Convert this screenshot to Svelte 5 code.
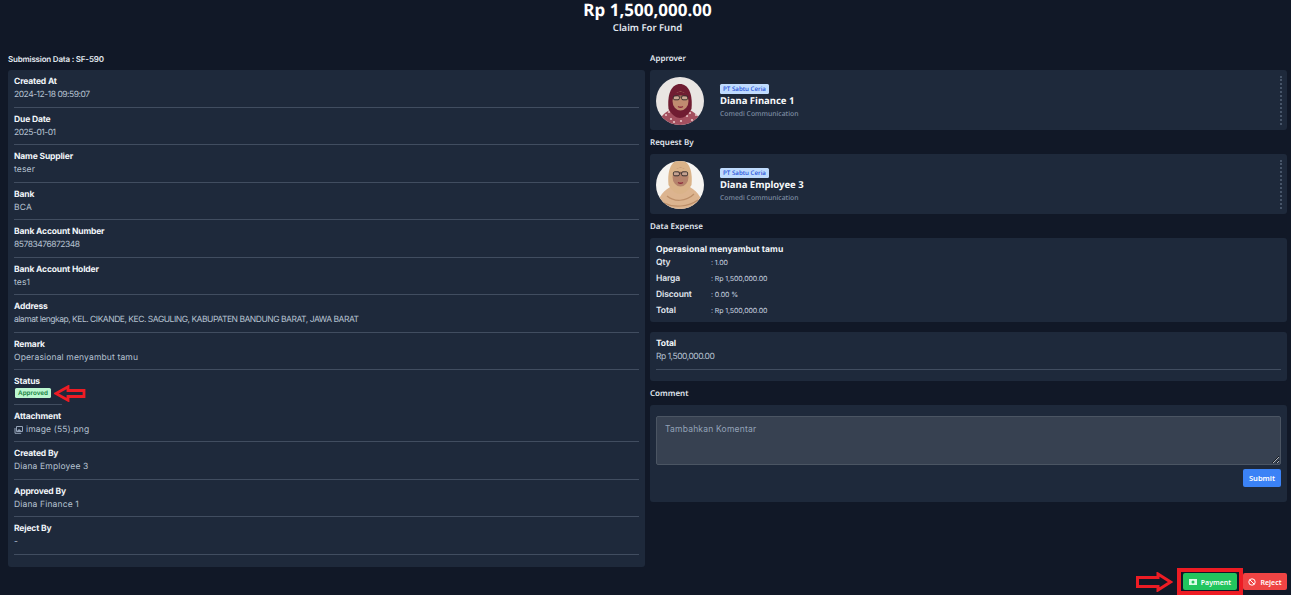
<script lang="ts">
	const fields = [
		{ label: 'Created At', value: '2024-12-18 09:59:07', tight: true },
		{ label: 'Due Date', value: '2025-01-01', tight: true },
		{ label: 'Name Supplier', value: 'teser' },
		{ label: 'Bank', value: 'BCA' },
		{ label: 'Bank Account Number', value: '85783476872348', tight: true },
		{ label: 'Bank Account Holder', value: 'tes1' },
		{ label: 'Address', value: 'alamat lengkap, KEL. CIKANDE, KEC. SAGULING, KABUPATEN BANDUNG BARAT, JAWA BARAT', tight: true },
		{ label: 'Remark', value: 'Operasional menyambut tamu' }
	];
	const people = [
		{ heading: 'Approver', name: 'Diana Finance 1', scarf: '#6f1f33', cloth: '#a3505f', skin: '#c08c70', bg: '#e9e5e3', dy: 0, pattern: true },
		{ heading: 'Request By', name: 'Diana Employee 3', scarf: '#dab389', cloth: '#dcb48f', skin: '#b5836c', bg: '#f6f4f1', dy: -8, pattern: false }
	];
	const footerFields = [
		{ label: 'Created By', value: 'Diana Employee 3' },
		{ label: 'Approved By', value: 'Diana Finance 1' },
		{ label: 'Reject By', value: '-' }
	];
	const expense = [
		{ label: 'Qty', value: ': 1.00' },
		{ label: 'Harga', value: ': Rp 1,500,000.00' },
		{ label: 'Discount', value: ': 0.00 %' },
		{ label: 'Total', value: ': Rp 1,500,000.00' }
	];
	const flecks = [[10, 38], [15, 42], [20, 38], [25, 44], [31, 39], [36, 43], [40, 38], [13, 35], [34, 36], [18, 45]];
</script>

<div class="page">
	<header class="top">
		<h1>Rp 1,500,000.00</h1>
		<p>Claim For Fund</p>
	</header>

	<div class="columns">
		<section class="left">
			<h2 class="left-head">Submission Data : SF-590</h2>
			<div class="card details">
				{#each fields as f}
					<div class="field">
						<div class="label">{f.label}</div>
						<div class="value" class:tight={f.tight}>{f.value}</div>
					</div>
				{/each}

				<div class="field status">
					<div class="label">Status</div>
					<div class="status-line">
						<span class="badge-ok">Approved</span>
						<svg class="note-arrow small" viewBox="0 0 32 17" aria-hidden="true">
							<path d="M2 8.5 L14 1.8 V5.5 H30 V11.5 H14 V15.2 Z" fill="none" stroke="#ed1c24" stroke-width="2.8" />
						</svg>
					</div>
				</div>

				<div class="field">
					<div class="label">Attachment</div>
					<div class="value file">
						<svg width="9" height="8" viewBox="0 0 9 8" aria-hidden="true">
							<path d="M2.5 0.5h6v5h-6z M1 2v5.3h6.2" fill="none" stroke="#94a3b8" stroke-width="1" />
							<path d="M3 5l2-2 3 2.5H3z" fill="#94a3b8" />
						</svg>
						<span>image (55).png</span>
					</div>
				</div>

				{#each footerFields as f}
					<div class="field">
						<div class="label">{f.label}</div>
						<div class="value">{f.value}</div>
					</div>
				{/each}
			</div>
		</section>

		<section class="right">
			{#each people as p, i}
				<h2>{p.heading}</h2>
				<div class="card person">
					<svg class="avatar" viewBox="0 0 48 48" aria-hidden="true">
						<defs>
							<clipPath id="round-{i}"><circle cx="24" cy="24" r="24" /></clipPath>
							<filter id="soft-{i}"><feGaussianBlur stdDeviation="0.45" /></filter>
						</defs>
						<g clip-path="url(#round-{i})">
							<rect width="48" height="48" fill={p.bg} />
							<g filter="url(#soft-{i})">
								{#if p.pattern}
									<path d="M2 48 C4 39 9 35 16 32 H32 C38 35 44 39 46 48 Z" fill={p.cloth} />
									{#each flecks as [x, y]}
										<circle cx={x} cy={y} r="1.1" fill="#e8c4c6" />
									{/each}
								{:else}
									<path d="M0 48 C2 34 9 29 16 25 H32 C39 29 46 34 48 48 Z" fill={p.cloth} />
									<path d="M11 35 C18 41 30 41 38 33 M8 42 C18 47 32 46 42 39" fill="none" stroke="#bd8f69" stroke-width="1.2" />
								{/if}
								<g transform="translate(0 {p.dy})">
									<path d="M12.5 32 C11 16 16 7 24 7 C32 7 37 16 35.5 32 C32 38 28 41 24 41 C20 41 16 38 12.5 32 Z" fill={p.scarf} />
									<ellipse cx="24.5" cy="24" rx="8" ry="9.5" fill={p.skin} />
									<path d="M16 21 C16 13 33 13 33 21 C29 17.5 20 17.5 16 21 Z" fill={p.scarf} />
									<rect x="17.4" y="18.8" width="6" height="4" rx="1.4" fill="#d8c6bd" fill-opacity="0.45" stroke="#2b2526" stroke-width="0.9" />
									<rect x="25.6" y="18.8" width="6" height="4" rx="1.4" fill="#d8c6bd" fill-opacity="0.45" stroke="#2b2526" stroke-width="0.9" />
									<path d="M23.4 20h2.2" stroke="#2b2526" stroke-width="0.7" />
									<path d="M22 29.5 Q24.5 31 27 29.5" fill="none" stroke="#8f2f3c" stroke-width="1.3" />
								</g>
							</g>
						</g>
					</svg>
					<div class="who">
						<span class="company">PT Sabtu Ceria</span>
						<strong>{p.name}</strong>
						<span class="dept">Comedi Communication</span>
					</div>
					<div class="dots"></div>
				</div>
			{/each}

			<h2>Data Expense</h2>
			<div class="card expense">
				<div class="expense-title">Operasional menyambut tamu</div>
				{#each expense as e}
					<div class="expense-row">
						<span class="k">{e.label}</span>
						<span class="v">{e.value}</span>
					</div>
				{/each}
			</div>

			<div class="card total">
				<div class="label">Total</div>
				<div class="value tight">Rp 1,500,000.00</div>
			</div>

			<h2 class="comment-head">Comment</h2>
			<div class="card comment">
				<textarea placeholder="Tambahkan Komentar"></textarea>
				<div class="submit-row"><button class="btn blue">Submit</button></div>
			</div>
		</section>
	</div>

	<footer class="actions">
		<svg class="note-arrow big" viewBox="0 0 37 20" aria-hidden="true">
			<path d="M1.5 5.5 H22 V2 L34.5 10 L22 18 V14.5 H1.5 Z" fill="none" stroke="#ed1c24" stroke-width="3" />
		</svg>
		<div class="highlight">
			<button class="btn green">
				<svg width="8" height="6" viewBox="0 0 8 6" aria-hidden="true">
					<path fill-rule="evenodd" d="M0 0h8v6H0z M4 1.5a1.5 1.5 0 1 0 0 3a1.5 1.5 0 0 0 0-3z" fill="#dcfce7" />
				</svg>
				Payment
			</button>
		</div>
		<button class="btn red">
			<svg width="8" height="8" viewBox="0 0 8 8" aria-hidden="true">
				<circle cx="4" cy="4" r="3.2" fill="none" stroke="#fff" stroke-width="1" />
				<path d="M1.8 1.8l4.4 4.4" stroke="#fff" stroke-width="1" />
			</svg>
			Reject
		</button>
	</footer>
</div>

<style>
	:global(body) {
		margin: 0;
		background: #111827;
		font-family: "Noto Sans", "Open Sans", sans-serif;
		color: #f1f5f9;
		text-rendering: geometricPrecision;
	}

	.page {
		height: 595px;
		overflow: hidden;
		padding: 0 4px 0 8px;
		box-sizing: border-box;
		display: flex;
		flex-direction: column;
	}

	.top {
		text-align: center;
		height: 52px;
	}

	.top h1 {
		margin: 0;
		font-size: 17px;
		line-height: 20px;
		font-weight: 700;
		color: #fff;
	}

	.top p {
		margin: 1px 0 0;
		font-size: 9.5px;
		line-height: 14px;
		font-weight: 600;
		color: #e2e8f0;
	}

	.columns {
		display: grid;
		grid-template-columns: 1fr 1fr;
		gap: 5px;
	}

	h2 {
		margin: 0;
		box-sizing: border-box;
		padding-top: 1px;
		font-size: 8px;
		line-height: 12px;
		height: 18px;
		font-weight: 600;
		color: #e2e8f0;
	}

	.left-head {
		font-family: "Inter", sans-serif;
		letter-spacing: -0.2px;
	}

	.card {
		background: #1e293b;
		border-radius: 3px;
		box-sizing: border-box;
	}

	.details {
		height: 497px;
		padding: 5px 6px 0;
	}

	.field {
		height: 32.5px;
		margin-bottom: 5px;
		padding-top: 1px;
		box-sizing: border-box;
		border-bottom: 1px solid #414d60;
	}

	.label {
		font-family: "Inter", sans-serif;
		font-size: 8.5px;
		line-height: 12px;
		font-weight: 700;
		letter-spacing: -0.15px;
		color: #f1f5f9;
	}

	.value {
		margin-top: 1px;
		font-family: "Inter", sans-serif;
		font-size: 8.5px;
		line-height: 12px;
		letter-spacing: 0.15px;
		color: #b6c2d1;
	}

	.value.tight {
		letter-spacing: -0.48px;
	}

	.status {
		height: 29.5px;
		border-bottom: none;
		position: relative;
	}

	.status::after {
		content: '';
		position: absolute;
		left: 0;
		bottom: 0;
		width: 48px;
		height: 1px;
		background: #414d60;
	}

	.status-line {
		display: flex;
		align-items: center;
		height: 10px;
	}

	.badge-ok {
		background: #bbf7d0;
		color: #15803d;
		font-family: "Inter", sans-serif;
		font-size: 6.3px;
		font-weight: 600;
		line-height: 10px;
		width: 36px;
		text-align: center;
		border-radius: 1.5px;
		margin-left: 1px;
	}

	.note-arrow.small {
		width: 32px;
		height: 17px;
		margin-left: 3px;
		flex: none;
	}

	.file {
		display: flex;
		align-items: center;
		gap: 3px;
	}

	.person {
		height: 60px;
		padding: 7px 0 0 6px;
		margin-bottom: 6px;
		display: flex;
		position: relative;
	}

	.avatar {
		width: 48px;
		height: 48px;
		flex: none;
	}

	.who {
		margin-left: 16px;
		display: flex;
		flex-direction: column;
		align-items: flex-start;
		padding-top: 7px;
	}

	.company {
		background: #bfdbfe;
		color: #1d4ed8;
		font-size: 6.2px;
		line-height: 10px;
		width: 49px;
		text-align: center;
		border-radius: 1.5px;
		font-weight: 500;
	}

	.who strong {
		font-size: 9.5px;
		line-height: 14px;
		font-weight: 700;
		color: #f8fafc;
	}

	.dept {
		margin-top: 1px;
		font-size: 6.8px;
		line-height: 10px;
		color: #7f8ea3;
		font-weight: 500;
	}

	.dots {
		position: absolute;
		right: 5px;
		top: 6px;
		height: 49px;
		border-right: 2px dotted #475569;
	}

	.expense {
		height: 84px;
		padding: 7px 6px 0;
		margin-bottom: 10px;
		font-family: "Inter", sans-serif;
	}

	.expense-title {
		font-size: 8.5px;
		line-height: 10px;
		font-weight: 700;
		letter-spacing: 0.1px;
		color: #f1f5f9;
	}

	.expense-row {
		display: flex;
		height: 16px;
		align-items: center;
	}

	.k {
		width: 55px;
		font-size: 8.5px;
		font-weight: 600;
		letter-spacing: -0.1px;
		color: #e2e8f0;
	}

	.v {
		margin-bottom: 2px;
		font-size: 7px;
		letter-spacing: -0.1px;
		color: #cbd5e1;
	}

	.total {
		height: 49px;
		padding: 6px 6px 0;
	}

	.total .value {
		margin-top: 1px;
		padding-bottom: 6px;
		border-bottom: 1px solid #414d60;
	}

	.comment-head {
		margin-top: 6px;
	}

	.comment {
		height: 97px;
		padding: 11px 6px 0;
	}

	textarea {
		display: block;
		width: 100%;
		height: 49px;
		box-sizing: border-box;
		background: #374151;
		border: 1px solid #4b5563;
		border-radius: 2px;
		padding: 7px 8px;
		font-family: "Inter", sans-serif;
		font-size: 8.5px;
		letter-spacing: 0.2px;
		color: #cbd5e1;
	}

	textarea::placeholder {
		color: #94a3b8;
	}

	.submit-row {
		display: flex;
		justify-content: flex-end;
		margin-top: 4px;
	}

	.btn {
		border: none;
		border-radius: 2px;
		color: #fff;
		font-family: "Noto Sans", sans-serif;
		font-size: 7px;
		font-weight: 600;
		height: 17px;
		padding: 0;
		display: flex;
		align-items: center;
		justify-content: center;
		gap: 4px;
	}

	.blue {
		background: #3b82f6;
		width: 38px;
		height: 18px;
		font-size: 7.5px;
	}

	.actions {
		display: flex;
		justify-content: flex-end;
		margin-top: 1px;
		height: 27px;
	}

	.note-arrow.big {
		width: 37px;
		height: 20px;
		margin: 4px 4px 0 0;
	}

	.highlight {
		border: 4px solid #ed1c24;
		padding: 1px 2px;
		height: 27px;
		box-sizing: border-box;
	}

	.green {
		background: #22c55e;
		width: 54px;
		padding-top: 1px;
	}

	.red {
		background: #ef4444;
		width: 44px;
		margin-top: 5px;
		padding-top: 1px;
	}
</style>
